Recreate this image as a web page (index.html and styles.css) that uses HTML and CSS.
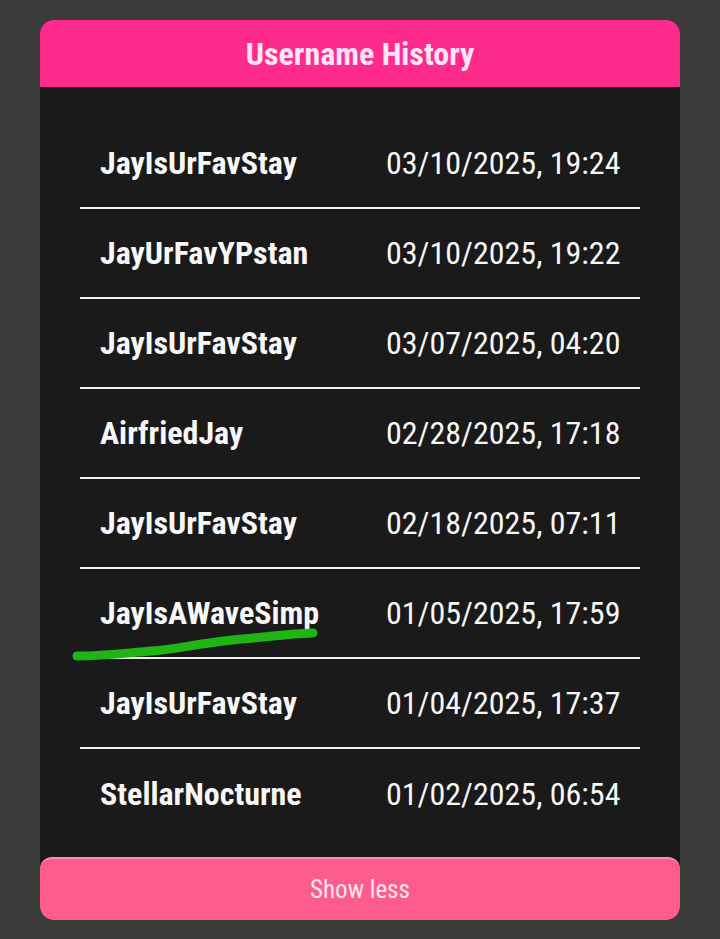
FILE: index.html
```html
<!DOCTYPE html>
<html>
<head>
<meta charset="utf-8">
<link rel="stylesheet" href="styles.css">
</head>
<body>
<div class="page">
  <div class="card">
    <div class="header"><h1 class="title">Username History</h1></div>
    <div class="list">
      <div class="row"><span class="name">JayIsUrFavStay</span><span class="date">03/10/2025, 19:24</span></div>
      <div class="row"><span class="name">JayUrFavYPstan</span><span class="date">03/10/2025, 19:22</span></div>
      <div class="row"><span class="name">JayIsUrFavStay</span><span class="date">03/07/2025, 04:20</span></div>
      <div class="row"><span class="name">AirfriedJay</span><span class="date">02/28/2025, 17:18</span></div>
      <div class="row"><span class="name">JayIsUrFavStay</span><span class="date">02/18/2025, 07:11</span></div>
      <div class="row marked"><span class="name">JayIsAWaveSimp</span><span class="date">01/05/2025, 17:59</span>
        <svg class="scribble" width="260" height="40" viewBox="0 0 260 40"><path d="M5 32 C 30 32, 55 29, 80 27 S 135 18, 170 15 S 215 10, 241 9" fill="none" stroke="#1fb515" stroke-width="9" stroke-linecap="round"/></svg>
      </div>
      <div class="row"><span class="name">JayIsUrFavStay</span><span class="date">01/04/2025, 17:37</span></div>
      <div class="row last"><span class="name">StellarNocturne</span><span class="date">01/02/2025, 06:54</span></div>
    </div>
    <button class="toggle">Show less</button>
  </div>
</div>
</body>
</html>
```
FILE: styles.css
```css
html, body { margin: 0; padding: 0; }
body {
  background: #3b3b3b;
  font-family: "Roboto Condensed", Roboto, "Liberation Sans", sans-serif;
  width: 720px;
  height: 939px;
  overflow: hidden;
}
.page { padding: 20px 40px 0; }
.card {
  width: 640px;
  background: #1a1a1a;
  border-radius: 14px;
  overflow: hidden;
}
.header {
  height: 67px;
  background: #ff2b8c;
  display: flex;
  align-items: center;
  justify-content: center;
}
.title {
  margin: 0;
  font-size: 32px;
  font-weight: 700;
  color: #fde6f3;
}
.list { padding: 32px 40px 18px; }
.row {
  position: relative;
  height: 88px;
  border-bottom: 2px solid #f2f2f2;
  display: grid;
  grid-template-columns: 286px 1fr;
  align-items: center;
  padding-left: 20px;
  color: #f7f7f7;
  font-size: 32px;
}
.row.last { border-bottom: none; height: 90px; }
.name { font-weight: 700; }
.date { font-weight: 400; }
.scribble { position: absolute; left: -8px; top: 55px; }
.toggle {
  display: block;
  width: 100%;
  height: 63px;
  border: none;
  border-top: 2px solid #ff8db0;
  border-radius: 12px;
  background: #ff5c8e;
  color: #fde6f0;
  font-family: inherit;
  font-size: 25px;
  font-weight: 400;
  padding: 0;
}
```
